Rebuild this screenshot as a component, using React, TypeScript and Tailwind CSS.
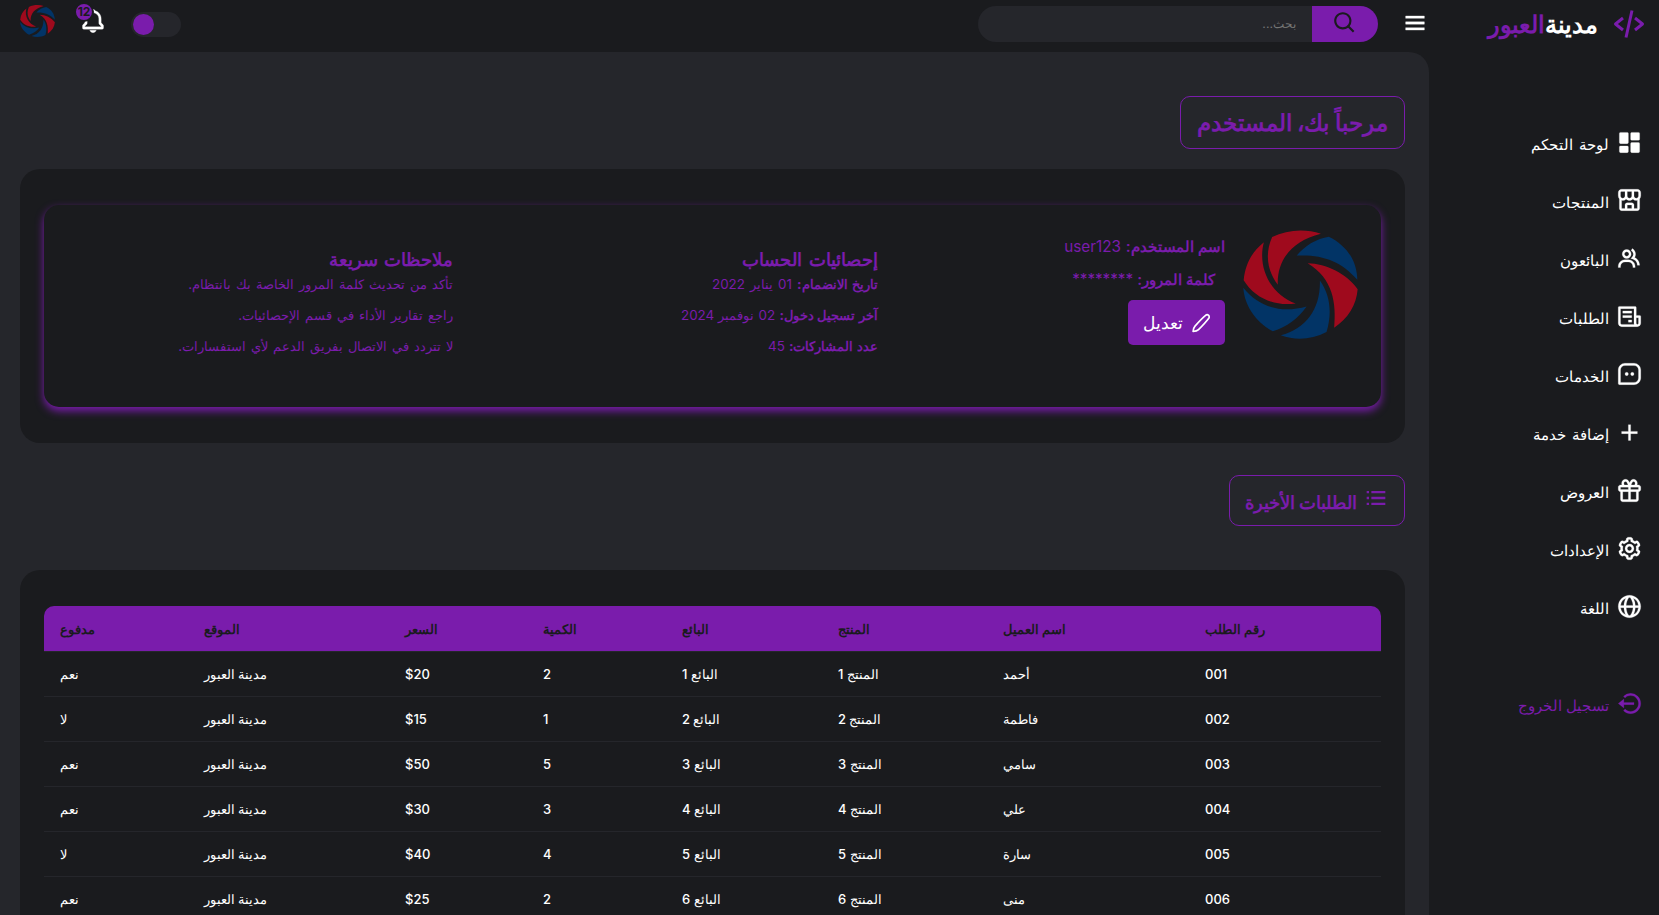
import React from "react";
import {
  BiStoreAlt,
  BiGroup,
  BiReceipt,
  BiMessageSquareDots,
  BiPlus,
  BiGift,
  BiCog,
  BiGlobe,
  BiLogOutCircle,
  BiSolidDashboard,
  BiListUl,
  BiBell,
  BiSearch,
  BiMenu,
  BiCodeAlt,
} from "react-icons/bi";
import type { IconType } from "react-icons";

const menu: { icon: IconType; label: string }[] = [
  { icon: BiSolidDashboard, label: "لوحة التحكم" },
  { icon: BiStoreAlt, label: "المنتجات" },
  { icon: BiGroup, label: "البائعون" },
  { icon: BiReceipt, label: "الطلبات" },
  { icon: BiMessageSquareDots, label: "الخدمات" },
  { icon: BiPlus, label: "إضافة خدمة" },
  { icon: BiGift, label: "العروض" },
  { icon: BiCog, label: "الإعدادات" },
  { icon: BiGlobe, label: "اللغة" },
];

const columns = [
  { label: "رقم الطلب", width: "w-[192px]" },
  { label: "اسم العميل", width: "w-[202px]" },
  { label: "المنتج", width: "w-[165px]" },
  { label: "البائع", width: "w-[156px]" },
  { label: "الكمية", width: "w-[139px]" },
  { label: "السعر", width: "w-[138px]" },
  { label: "الموقع", width: "w-[201px]" },
  { label: "مدفوع", width: "w-[144px]" },
];

const orders = [
  ["001", "أحمد", "المنتج 1", "البائع 1", "2", "$20", "مدينة العبور", "نعم"],
  ["002", "فاطمة", "المنتج 2", "البائع 2", "1", "$15", "مدينة العبور", "لا"],
  ["003", "سامي", "المنتج 3", "البائع 3", "5", "$50", "مدينة العبور", "نعم"],
  ["004", "علي", "المنتج 4", "البائع 4", "3", "$30", "مدينة العبور", "نعم"],
  ["005", "سارة", "المنتج 5", "البائع 5", "4", "$40", "مدينة العبور", "لا"],
  ["006", "منى", "المنتج 6", "البائع 6", "2", "$25", "مدينة العبور", "نعم"],
];

function Logo({ className }: { className: string }) {
  return (
    <svg viewBox="368 29 347 328" className={className} preserveAspectRatio="none">
      <g fill="#9f0a1d">
        <path d="M456 50C500 28 555 24 603 40C515 62 470 120 473 194C440 150 434 100 456 50Z" />
        <path d="M563 129C620 130 680 160 714 207C710 255 685 295 643 323C650 250 640 175 563 129Z" />
        <path d="M431 66C410 145 455 225 527 250C462 260 402 232 370 180C375 130 395 95 431 66Z" />
      </g>
      <g fill="#023466">
        <path d="M627 49C680 75 712 120 713 179C665 122 605 102 530 106C555 75 590 55 627 49Z" />
        <path d="M600 181C632 225 637 280 620 336C575 360 525 362 482 346C560 325 602 265 600 181Z" />
        <path d="M369 203C415 262 485 280 560 259C535 295 500 320 458 334C405 305 372 255 369 203Z" />
      </g>
    </svg>
  );
}

function PencilIcon() {
  return (
    <svg
      viewBox="0 0 20 20"
      className="h-5 w-5"
      fill="none"
      stroke="currentColor"
      strokeWidth="1.7"
      strokeLinejoin="round"
    >
      <path d="M14.6 2.4a2.1 2.1 0 0 1 3 3c-2.6 3.4-6.4 7.5-10.1 11.2-.9.9-2.6 1.7-5.4 1.9.2-2.6 1-4.4 1.9-5.4C7.5 9.2 11 5.3 14.6 2.4z" />
    </svg>
  );
}

export default function App() {
  return (
    <div
      dir="rtl"
      className="flex h-[915px] w-[1659px] overflow-hidden bg-[#1a1b1e] font-['Inter','Noto_Sans',sans-serif] text-white"
    >
      <aside className="flex w-[230px] shrink-0 flex-col">
        <div className="flex h-[47px] items-center">
          <span className="flex w-[60px] justify-center text-[#7a1cac]">
            <BiCodeAlt size={36} />
          </span>
          <span className="mr-px pt-px text-[24.3px] leading-[47px] font-bold whitespace-nowrap">
            مدينة<span className="font-semibold text-[#7a1cac]">العبور</span>
          </span>
        </div>
        <nav className="mt-[71px] flex flex-col gap-[10px]">
          {menu.map(({ icon: Icon, label }) => (
            <a key={label} className="flex h-12 items-center">
              <span className="flex w-[60px] justify-center">
                <Icon size={27} strokeWidth={0.2} />
              </span>
              <span className="-mr-2.5 pt-[6px] text-[15.3px] [word-spacing:1.5px] whitespace-nowrap">
                {label}
              </span>
            </a>
          ))}
        </nav>
        <a className="mt-[49px] flex h-12 items-center text-[#7a1cac]">
          <span className="flex w-[60px] justify-center">
            <BiLogOutCircle size={27} strokeWidth={0.2} />
          </span>
          <span className="-mr-2.5 pt-[6px] text-[15.1px] whitespace-nowrap">تسجيل الخروج</span>
        </a>
      </aside>

      <div className="flex w-[1429px] shrink-0 flex-col">
        <header className="flex h-[52px] items-start">
          <BiMenu size={28} strokeWidth={0.3} className="mt-[9px] shrink-0" />
          <form className="mt-1.5 mr-[23px] flex h-9 w-[400px] shrink-0">
            <button
              type="button"
              className="flex w-[66px] items-center justify-center rounded-r-[18px] bg-[#7a1cac] pb-[3px] text-[#1a1b1e]"
            >
              <BiSearch size={26} />
            </button>
            <div className="flex h-9 flex-1 items-center rounded-l-[18px] bg-[#25262b] pr-4 text-[12.3px] text-[#757575]">
              بحث...
            </div>
          </form>
          <div className="mt-3 mr-auto flex h-[25px] w-[50px] items-center justify-end rounded-full bg-[#25262b] p-0.5">
            <div className="h-[21px] w-[21px] rounded-full bg-[#7a1cac]" />
          </div>
          <div className="relative mt-[7px] mr-[24px] h-7 w-7">
            <BiBell size={28} strokeWidth={0.25} />
            <span className="absolute -top-[5px] -left-[5px] flex h-5 w-5 items-center justify-center rounded-full border-2 border-[#1a1b1e] bg-[#7a1cac] text-[12px] font-bold text-[#1a1b1e]">
              12
            </span>
          </div>
          <Logo className="mt-[5px] mr-6 ml-5 h-8 w-[35px]" />
        </header>

        <main className="flex flex-1 flex-col items-start overflow-hidden rounded-tr-[20px] bg-[#25262b] px-5 pt-11 pr-6">
          <h1 className="flex h-[53px] w-[225px] shrink-0 items-center justify-center rounded-[10px] border border-[#7a1cac] pt-px text-[22.7px] font-semibold whitespace-nowrap text-[#7a1cac]">
            مرحباً بك، المستخدم
          </h1>

          <section className="mt-5 h-[274px] w-[1385px] shrink-0 rounded-[20px] bg-[#1a1b1e] px-6 py-9">
            <div className="flex h-[202px] rounded-[15px] bg-[#1a1b1e] pr-[23px] text-[#7a1cac] shadow-[0_4px_8px_#7a1cac]">
              <Logo className="mt-[25px] h-[109px] w-[115px] shrink-0" />
              <div className="mr-[18px] flex w-[347px] shrink-0 flex-col items-start pt-[25px]">
                <p className="h-[33px] text-[15.3px] leading-[33px] [word-spacing:0.5px] whitespace-nowrap">
                  <b className="font-semibold">اسم المستخدم:</b> user123
                </p>
                <p className="mr-[10px] h-[33px] text-[15.2px] leading-[33px] whitespace-nowrap">
                  <b className="font-semibold">كلمة المرور:</b> ********
                </p>
                <button
                  type="button"
                  className="mt-1 flex h-[45px] w-[97px] items-center justify-center gap-2 rounded-[5px] bg-[#7a1cac] text-[16.5px] text-white"
                >
                  <PencilIcon />
                  <span className="pt-px">تعديل</span>
                </button>
              </div>
              <div className="flex w-[425px] shrink-0 flex-col pt-[40px] text-[13.4px]">
                <h3 className="h-[24px] text-[18.3px] leading-[28px] font-bold [word-spacing:3px]">
                  إحصائيات الحساب
                </h3>
                <p className="h-[31px] leading-[31px] [word-spacing:1.3px]">
                  <b>تاريخ الانضمام:</b> 01 يناير 2022
                </p>
                <p className="h-[31px] leading-[31px] [word-spacing:0.4px]">
                  <b>آخر تسجيل دخول:</b> 02 نوفمبر 2024
                </p>
                <p className="h-[31px] leading-[31px] [word-spacing:0.4px]">
                  <b>عدد المشاركات:</b> 45
                </p>
              </div>
              <div className="flex flex-1 flex-col pt-[40px] text-[13.2px] [word-spacing:1.3px]">
                <h3 className="h-[24px] text-[18.2px] leading-[28px] font-bold">ملاحظات سريعة</h3>
                <p className="h-[31px] leading-[31px]">تأكد من تحديث كلمة المرور الخاصة بك بانتظام.</p>
                <p className="h-[31px] leading-[31px]">راجع تقارير الأداء في قسم الإحصائيات.</p>
                <p className="h-[31px] leading-[31px]">لا تتردد في الاتصال بفريق الدعم لأي استفسارات.</p>
              </div>
            </div>
          </section>

          <h2 className="mt-8 flex h-[51px] w-[176px] shrink-0 items-center rounded-[10px] border border-[#7a1cac] pr-[14px] text-[17.9px] font-bold whitespace-nowrap text-[#7a1cac]">
            <BiListUl size={28} className="mb-[6px] shrink-0" />
            <span className="mr-[5px] pt-1.5">الطلبات الأخيرة</span>
          </h2>

          <section className="mt-11 h-[420px] w-[1385px] shrink-0 rounded-[20px] bg-[#1a1b1e] px-6 pt-9">
            <table className="w-[1337px] table-fixed border-separate border-spacing-0 text-left text-[13px] leading-5 font-medium">
              <thead>
                <tr className="h-[45px] text-[13.3px] text-[#1a1b1e]">
                  {columns.map(({ label, width }) => (
                    <th
                      key={label}
                      className={`${width} bg-[#7a1cac] py-0 pl-4 text-left font-semibold first:rounded-tr-[10px] last:rounded-tl-[10px]`}
                    >
                      {label}
                    </th>
                  ))}
                </tr>
              </thead>
              <tbody>
                {orders.map((row) => (
                  <tr key={row[0]} className="h-[45px]">
                    {row.map((cell, i) => (
                      <td key={i} className="border-t border-[#25262b] py-0 pl-4">
                        {cell}
                      </td>
                    ))}
                  </tr>
                ))}
              </tbody>
            </table>
          </section>
        </main>
      </div>
    </div>
  );
}
